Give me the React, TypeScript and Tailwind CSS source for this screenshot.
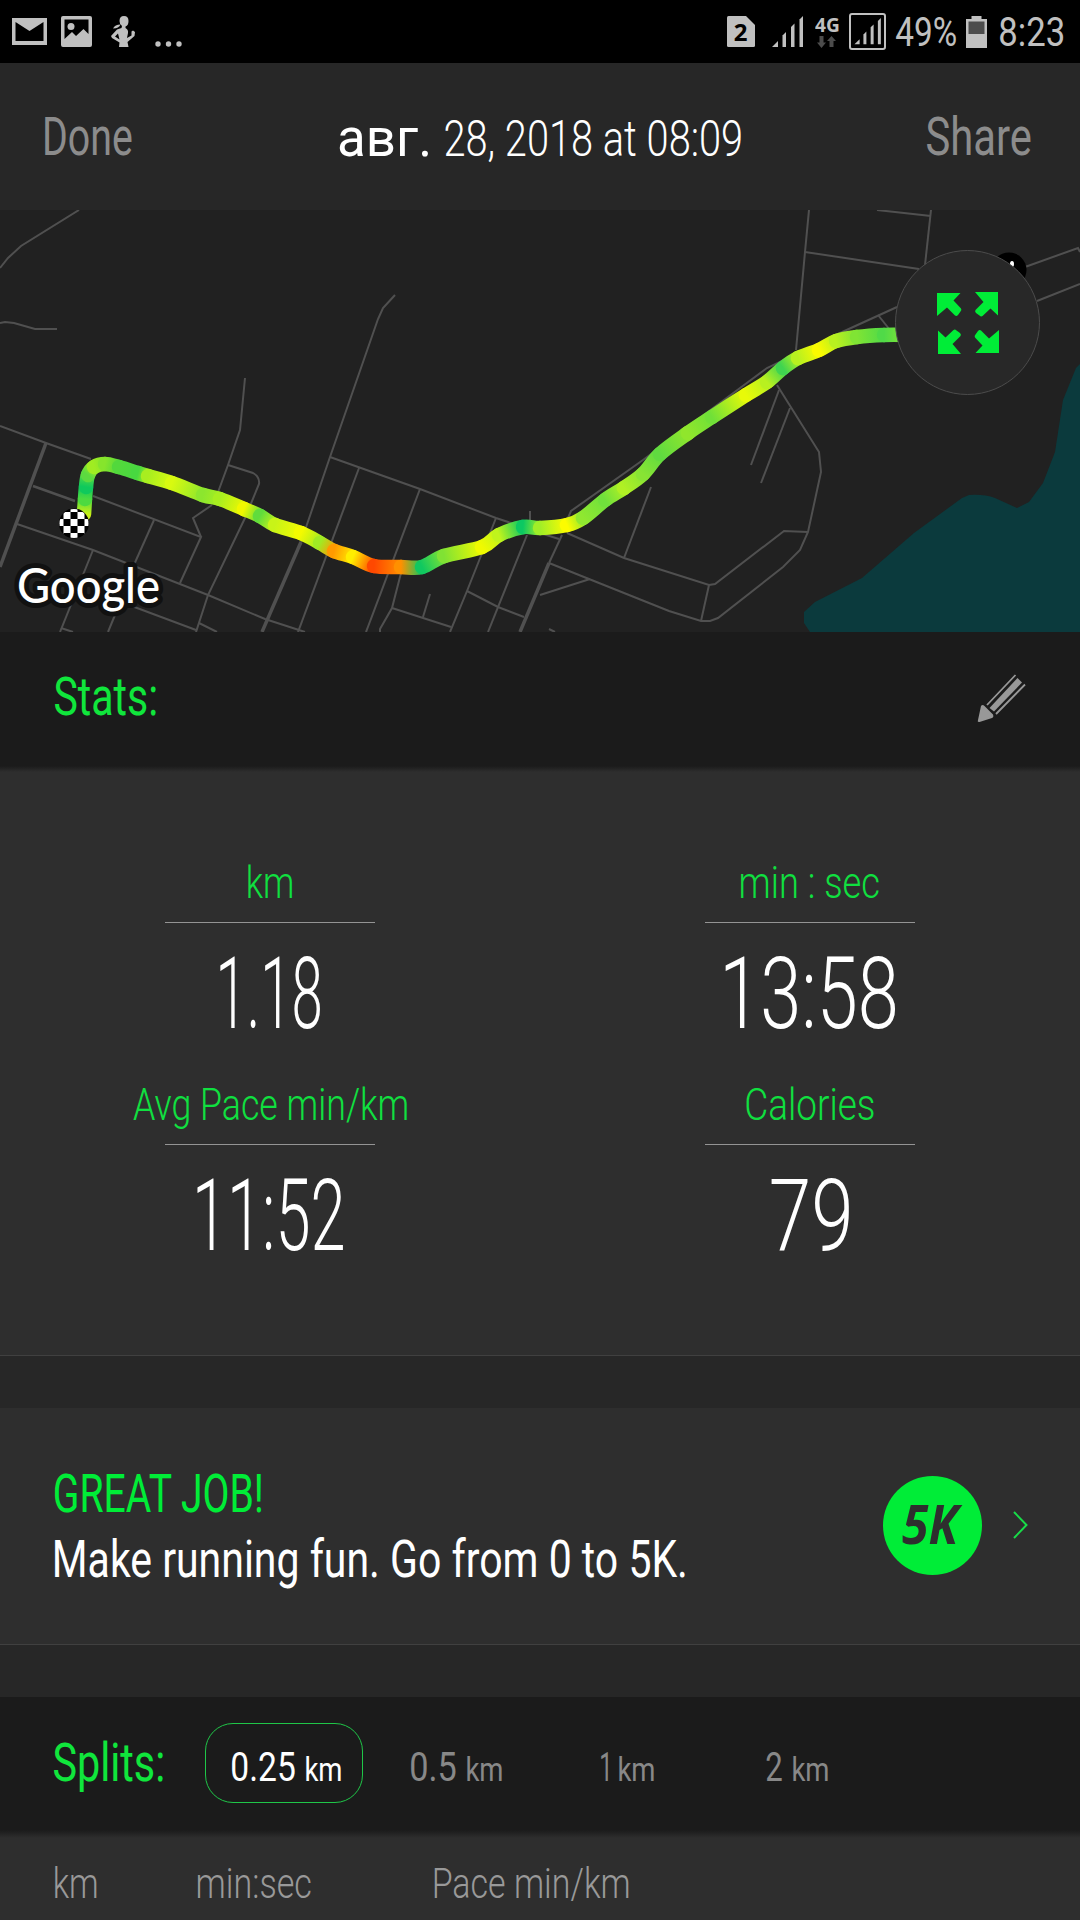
import { useLayoutEffect, useRef, useState, type ReactNode } from 'react';
import clsx from 'clsx';

interface FitTextProps {
  children: string;
  width: number;
  className?: string;
}

// Condensed display text: squeezes a line horizontally so its ink fills `width`.
function FitText({ children, width, className }: FitTextProps) {
  const ref = useRef<HTMLSpanElement>(null);
  const [fit, setFit] = useState({ scale: 1, left: 0 });

  useLayoutEffect(() => {
    const ctx = document.createElement('canvas').getContext('2d');
    if (!ref.current || !ctx) return;
    const css = getComputedStyle(ref.current);
    ctx.font = `${css.fontStyle} ${css.fontWeight} ${css.fontSize} ${css.fontFamily}`;
    const m = ctx.measureText(children);
    const scale = width / (m.actualBoundingBoxRight + m.actualBoundingBoxLeft);
    setFit({ scale, left: m.actualBoundingBoxLeft * scale });
  }, [children, width]);

  return (
    <span className={clsx('block shrink-0 leading-none whitespace-nowrap', className)} style={{ width }}>
      <span
        ref={ref}
        className="inline-block origin-left"
        style={{ transform: `translateX(${fit.left}px) scaleX(${fit.scale})` }}
      >
        {children}
      </span>
    </span>
  );
}

function SignalBars() {
  return (
    <g>
      <path d="M0 31 L6 25 V31 Z" />
      <path d="M10.5 31 V19.5 L14 16 V31 Z" />
      <path d="M19 31 V11 L22.5 7.5 V31 Z" />
      <path d="M27.5 31 V3.5 L31 0 V31 Z" />
    </g>
  );
}

function StatusBar() {
  return (
    <div className="flex h-[63px] items-center bg-black pl-3 pr-[17px] text-[#c0c0c0]">
      <svg className="h-[27px] w-[35px]" viewBox="0 0 35 27" fill="currentColor">
        <path fillRule="evenodd" d="M0 0 H35 V27 H0 Z M3.5 4 V23 H31.5 V4 L17.5 13 Z" />
      </svg>
      <svg className="ml-3.5 h-[31px] w-[31px]" viewBox="0 0 31 31" fill="currentColor">
        <path
          fillRule="evenodd"
          d="M2 0 H29 Q31 0 31 2 V29 Q31 31 29 31 H2 Q0 31 0 29 V2 Q0 0 2 0 Z M3.5 3.5 V23 L11 16 L15 20 L22.5 13 L27.5 18 V3.5 Z"
        />
        <circle cx="10" cy="10.5" r="3.5" />
      </svg>
      <svg className="ml-[19px] h-[31px] w-6" viewBox="0 0 24 31" fill="currentColor">
        <path
          fillRule="evenodd"
          d="M8.5 5 Q8.5 0 13 0 Q17.5 0 17.5 5 Q17.5 9.500 14.500 10.500 L14.500 12 Q17.500 13.500 17 17 L16 22 L20.500 19.500 L20.500 15.500 L22 14.500 L24 16 L23.500 20 L16.500 26 L17.500 31 H8 L8.500 26.500 L1 22 L0 20 L6 13.500 L10.500 12 L11 10 Q8.500 8.500 8.500 5 Z M7 17.500 L4 20.500 L8.500 23.500 Z"
        />
        <path d="M2 12.500 Q4 8.500 9.500 8.500 Q8 12.500 2 12.500 Z" />
      </svg>
      <svg className="ml-5 mt-[25px] h-[6px] w-[27px]" viewBox="0 0 27 6" fill="currentColor">
        <circle cx="3" cy="3" r="2.7" />
        <circle cx="13.500" cy="3" r="2.7" />
        <circle cx="24" cy="3" r="2.7" />
      </svg>

      <div className="ml-auto flex items-center">
        <svg className="h-[31px] w-7" viewBox="0 0 28 31">
          <path d="M1.500 0 H19 L28 9 V29.500 Q28 31 26.500 31 H1.500 Q0 31 0 29.500 V1.500 Q0 0 1.500 0 Z" fill="currentColor" />
          <text x="13.500" y="24.500" textAnchor="middle" className="fill-black font-['Open_Sans',sans-serif] text-[24px] font-bold">
            2
          </text>
        </svg>
        <svg className="ml-[17px] h-[31px] w-[31px]" viewBox="0 0 31 31" fill="currentColor">
          <SignalBars />
        </svg>
        <div className="ml-[11px] flex h-8 w-[25px] flex-col items-center justify-between">
          <FitText width={24} className="font-['Open_Sans',sans-serif] text-[19px] font-bold">
            4G
          </FitText>
          <svg className="h-3 w-[19px] shrink-0" viewBox="0 0 19 12" fill="#4c4c4c">
            <path d="M2.500 0 H6.500 V6.500 H9 L4.500 12 L0 6.500 H2.500 Z" />
            <path d="M12.500 11 H16.500 V5 H19 L14.500 0 L10 5 H12.500 Z" />
          </svg>
        </div>
        <svg className="ml-2.5 h-[37px] w-[37px]" viewBox="0 0 37 37">
          <rect x="1" y="1" width="35" height="35" rx="2" fill="none" stroke="currentColor" strokeWidth="2" />
          <g fill="currentColor" transform="translate(5.500 5) scale(.85)">
            <SignalBars />
          </g>
        </svg>
        <FitText width={60} className="ml-2.5 pt-[3px] text-[40px]">
          49%
        </FitText>
        <svg className="ml-2.5 h-8 w-[21px]" viewBox="0 0 21 32">
          <path d="M5.500 0 H15.500 V3 H21 V32 H0 V3 H5.500 Z" fill="currentColor" />
          <path d="M2.500 5.500 H18.500 V18 H2.500 Z" fill="#4c4c4c" />
        </svg>
        <FitText width={63} className="ml-[13px] pt-[3px] text-[40px]">
          8:23
        </FitText>
      </div>
    </div>
  );
}

const roads = [
  'M79 210 L21 246 L8 258 L0 268',
  'M0 323 L5 322 L14 323 L35 329 H57',
  'M395 295 L383 308 L378 319 L362 365 L330 457 L301 542',
  'M245 378 L240 430 L228 465 L217 495',
  'M228 465 L253 473 Q260 477 259 484 L245 518 L208 595 L196 632',
  'M0 426 L46 443 L91 459',
  'M93 496 L201 537 L180 583',
  'M212 505 L193 518 L201 537',
  'M17 524 L93 550 L208 595 L265 619 L305 632',
  'M154 520 L133 567',
  'M93 550 L60 632',
  'M61 628 L73 632',
  'M115 615 L108 632',
  'M129 605 L196 630',
  'M199 623 L217 632',
  'M330 457 L420 489 L496 518 L517 525',
  'M359 468 L298 632',
  'M420 489 L366 632',
  'M401 573 L392 608 L380 629 V632',
  'M392 608 L451 627',
  'M430 594 L423 617',
  'M496 518 L467 591 L450 632',
  'M467 591 L498 607 L524 617',
  'M530 511 V520',
  'M527 535 L488 632',
  'M809 210 L805 252 L796 350',
  'M877 210 L931 216',
  'M931 210 L925 265',
  'M805 252 L919 269',
  'M897 307 L840 333 L767 368 L643 460 L571 511 L568 518',
  'M878 315 L890 330',
  'M1025 267 L1078 248 L1080 252',
  'M1037 301 L1080 284',
  'M777 385 L819 452 L821 472 L808 532 L800 550 L783 567 L718 618 L710 621 H701 L669 611 L549 563',
  'M808 532 L784 531 L715 584 L709 585 L624 558 L567 533',
  'M709 585 L701 621',
  'M651 487 L624 558',
  'M779 390 L751 465',
  'M790 408 L761 483',
  'M562 535 L549 563',
  'M540 595 L590 579',
  'M549 629 L555 632',
  'M540 533 L559 539',
];

const mainRoads = ['M46 443 L0 567', 'M301 542 L262 632', 'M549 563 L520 632'];

type TrackPoint = [number, number, string];

// Recorded track: x, y, pace colour
const track: TrackPoint[] = [
  [84, 514, '#c8f018'],
  [85, 499, '#4cda40'],
  [86, 487, '#0fc95c'],
  [88, 475, '#5cda40'],
  [94, 467, '#a0ec22'],
  [105, 464, '#86e52c'],
  [119, 467, '#52d83c'],
  [138, 473, '#48d840'],
  [148, 476, '#a8ee20'],
  [172, 483, '#d8fa10'],
  [203, 495, '#8ce62e'],
  [220, 499, '#a8ee20'],
  [244, 509, '#f0f800'],
  [260, 516, '#60dc3c'],
  [275, 525, '#c8f418'],
  [301, 533, '#f4fa00'],
  [320, 543, '#a0ea24'],
  [334, 551, '#ff9a00'],
  [353, 557, '#ffee00'],
  [374, 566, '#ff4800'],
  [401, 567, '#ff9000'],
  [422, 567, '#10c860'],
  [444, 556, '#80e234'],
  [482, 547, '#f0fa00'],
  [499, 535, '#c0f41c'],
  [523, 527, '#0cc862'],
  [540, 528, '#a0ee28'],
  [567, 525, '#fcfc00'],
  [583, 518, '#90e830'],
  [605, 500, '#70e03c'],
  [624, 488, '#b0f024'],
  [643, 474, '#88e434'],
  [660, 454, '#60da40'],
  [688, 433, '#90e62c'],
  [712, 417, '#70e038'],
  [746, 395, '#e8fa08'],
  [767, 382, '#b8f020'],
  [783, 368, '#40d450'],
  [798, 358, '#b8f020'],
  [819, 350, '#fafa00'],
  [836, 341, '#b8f020'],
  [857, 337, '#80e434'],
  [884, 335, '#50da48'],
  [910, 335, '#90e830'],
];

// Catmull-Rom segment from point i to i + 1, as a cubic bezier
function segmentPath(i: number) {
  const [ax, ay] = track[Math.max(i - 1, 0)];
  const [bx, by] = track[i];
  const [cx, cy] = track[i + 1];
  const [dx, dy] = track[Math.min(i + 2, track.length - 1)];
  return `M${bx} ${by} C${bx + (cx - ax) / 6} ${by + (cy - ay) / 6} ${cx - (dx - bx) / 6} ${cy - (dy - by) / 6} ${cx} ${cy}`;
}

function Track() {
  return (
    <g strokeWidth="14.500" strokeLinecap="round">
      {track.slice(1).map(([x, y, color], i) => {
        const [px, py, prev] = track[i];
        return (
          <g key={i}>
            <linearGradient id={`pace-${i}`} gradientUnits="userSpaceOnUse" x1={px} y1={py} x2={x} y2={y}>
              <stop offset="0" stopColor={prev} />
              <stop offset="1" stopColor={color} />
            </linearGradient>
            <path d={segmentPath(i)} stroke={`url(#pace-${i})`} />
          </g>
        );
      })}
    </g>
  );
}

function FinishFlag() {
  const cells = [0, 1, 2, 3, 4].flatMap((row) => [0, 1, 2, 3, 4].map((col) => [row, col]));
  return (
    <g>
      <clipPath id="flag">
        <circle cx="74" cy="523.500" r="14.500" />
      </clipPath>
      <circle cx="74" cy="523.500" r="15" fill="#000" />
      <g clipPath="url(#flag)">
        {cells
          .filter(([row, col]) => (row + col) % 2 === 0)
          .map(([row, col]) => (
            <rect key={`${row}-${col}`} x={56.5 + col * 7} y={505 + row * 7} width="7" height="7" fill="#fff" />
          ))}
      </g>
    </g>
  );
}

function RouteMap() {
  return (
    <svg className="block h-[422px] w-full bg-[#212121]" viewBox="0 210 1080 422" fill="none">
      <path
        d="M1080 364 L1076 368 L1063 400 L1055 452 L1050 465 L1043 483 L1029 502 L1017 508 L995 498 Q984 494 969 495 L962 498 L914 533 L862 578 L815 602 L804 612 V623 L810 632 H1080 Z"
        fill="#0b3a3d"
      />
      <g stroke="#505050" strokeWidth="2">
        {roads.map((d) => (
          <path key={d} d={d} />
        ))}
      </g>
      <path d="M33 486 L75 501" stroke="#505050" strokeWidth="2.500" />
      <g stroke="#505050" strokeWidth="3.500">
        {mainRoads.map((d) => (
          <path key={d} d={d} />
        ))}
      </g>
      <Track />
      <FinishFlag />

      <circle cx="1009" cy="270" r="17.500" fill="#000" />
      <ellipse cx="1012" cy="264" rx="2" ry="3" fill="#fff" />

      <circle cx="967.500" cy="322.500" r="72" fill="#282828" stroke="#4c4c4c" />
      <g fill="#00ed37" transform="translate(968 323)">
        {[0, 90, 180, 270].map((angle) => (
          <path
            key={angle}
            transform={`rotate(${angle})`}
            d="M-31 -30 H-7.500 L-14.500 -22.500 L-7 -14.500 Q-6 -13 -7.500 -11.500 L-10 -8 Q-11.500 -6.500 -13 -7.500 L-21 -15.500 L-31 -7 Z"
          />
        ))}
      </g>

      <text
        x="17"
        y="602.500"
        textLength="143"
        lengthAdjust="spacingAndGlyphs"
        className="fill-white stroke-[#111] stroke-[10px] font-[Lato,sans-serif] text-[48px] font-medium [paint-order:stroke]"
        strokeLinejoin="round"
      >
        Google
      </text>
    </svg>
  );
}

function PencilIcon() {
  return (
    <svg className="h-[50px] w-[50px]" viewBox="0 0 50 50" fill="#989898">
      <path d="M1 47 L4 33 Q5.500 31 7.500 33 L16 41.500 Q17 44 15 45 L2.500 49 Q0 49.500 1 47 Z" />
      <path d="M12.500 35 L40.500 5 L45 9.500 L17 38.500 Z" />
      <path d="M10 32 L38.500 2 M19 41 L48 11.500" stroke="#989898" strokeWidth="1.800" />
    </svg>
  );
}

function Bar({ children }: { children: ReactNode }) {
  return <div className="flex items-center bg-[#1b1b1b]">{children}</div>;
}

interface StatProps {
  label: string;
  labelWidth: number;
  value: string;
  valueWidth: number;
}

function Stat({ label, labelWidth, value, valueWidth }: StatProps) {
  return (
    <div className="flex h-[222px] flex-col items-center">
      <FitText width={labelWidth} className="text-[45px] font-light text-[#10e040]">
        {label}
      </FitText>
      <div className="mt-[17px] h-px w-[210px] bg-[#949494]" />
      <FitText width={valueWidth} className="mt-5 text-[101px] font-light">
        {value}
      </FitText>
    </div>
  );
}

const stats: StatProps[] = [
  { label: 'km', labelWidth: 44, value: '1.18', valueWidth: 100 },
  { label: 'min : sec', labelWidth: 138, value: '13:58', valueWidth: 170 },
  { label: 'Avg Pace min/km', labelWidth: 274, value: '11:52', valueWidth: 146 },
  { label: 'Calories', labelWidth: 128, value: '79', valueWidth: 78 },
];

function SplitOption({ value, width, className }: { value: string; width: number; className?: string }) {
  return (
    <div className={clsx('flex shrink-0 items-baseline gap-[11px]', className)}>
      <FitText width={width} className="text-[41px]">
        {value}
      </FitText>
      <FitText width={35} className="text-[34px]">
        km
      </FitText>
    </div>
  );
}

export default function App() {
  return (
    <div className="h-[1920px] w-[1080px] overflow-hidden bg-[#2e2e2e] font-[Roboto,sans-serif] text-white">
      <StatusBar />

      <header className="flex h-[147px] items-center bg-[#272727] pt-0.5 pl-[45px] pr-[49px]">
        <FitText width={87} className="text-[53px] text-[#8c8c8c]">
          Done
        </FitText>
        <div className="ml-[207px] flex items-baseline gap-[17px]">
          <FitText width={89} className="text-[54px]">
            авг.
          </FitText>
          <FitText width={296} className="text-[50px] font-light">
            28, 2018 at 08:09
          </FitText>
        </div>
        <FitText width={104} className="ml-auto text-[53px] text-[#8c8c8c]">
          Share
        </FitText>
      </header>

      <RouteMap />

      <Bar>
        <div className="flex h-[134px] w-full items-center justify-between pb-[3px] pl-[55px] pr-[53px]">
          <FitText width={101} className="text-[53px] text-[#10e63c]">
            Stats:
          </FitText>
          <PencilIcon />
        </div>
      </Bar>

      <section className="h-[590px] border-b border-[#404040]">
        <div className="h-1.5 bg-linear-to-b from-[#1b1b1b] to-[#2e2e2e]" />
        <div className="grid grid-cols-2 pt-[88px]">
          {stats.map((stat) => (
            <Stat key={stat.label} {...stat} />
          ))}
        </div>
      </section>

      <div className="h-[52px] bg-[#272727]" />

      <section className="flex h-[237px] items-center border-b border-[#404040] pl-[55px] pr-[52px]">
        <div className="flex flex-col gap-[13px] pt-0.5">
          <FitText width={207} className="text-[53px] text-[#00ed37]">
            GREAT JOB!
          </FitText>
          <FitText width={630} className="text-[52px]">
            Make running fun. Go from 0 to 5K.
          </FitText>
        </div>
        <div className="mb-0.5 ml-auto flex size-[99px] items-center justify-center rounded-full bg-[#00ed37] pb-1">
          <FitText width={61} className="font-['Open_Sans',sans-serif] text-[53px] font-bold text-[#2e2e2e] italic">
            5K
          </FitText>
        </div>
        <svg className="mb-0.5 ml-[31px] h-7 w-[15px]" viewBox="0 0 15 28" fill="none">
          <path d="M1 1 L13.500 14 L1 27" stroke="#18dc48" strokeWidth="2" />
        </svg>
      </section>

      <div className="h-[52px] bg-[#272727]" />

      <Bar>
        <div className="flex h-[133px] items-center pb-0.5 pl-[54px]">
          <FitText width={109} className="pt-0.5 text-[53px] text-[#10e63c]">
            Splits:
          </FitText>
          <div className="ml-[42px] flex h-20 w-[158px] items-center justify-center rounded-[28px] border border-[#1fc648] pt-2.5 pl-1">
            <SplitOption value="0.25" width={63} />
          </div>
          <SplitOption value="0.5" width={45} className="ml-12 pt-2.5 text-[#888]" />
          <SplitOption value="1" width={7} className="ml-[99px] pt-2.5 text-[#888]" />
          <SplitOption value="2" width={16} className="ml-[112px] pt-2.5 text-[#888]" />
        </div>
      </Bar>
      <div className="h-2 bg-linear-to-b from-[#1b1b1b] to-[#2e2e2e]" />

      <div className="flex items-center pl-[55px] pt-6 text-[43px] font-light text-[#999]">
        <FitText width={42}>km</FitText>
        <FitText width={113} className="ml-[101px]">
          min:sec
        </FitText>
        <FitText width={195} className="ml-[123px]">
          Pace min/km
        </FitText>
      </div>
    </div>
  );
}
